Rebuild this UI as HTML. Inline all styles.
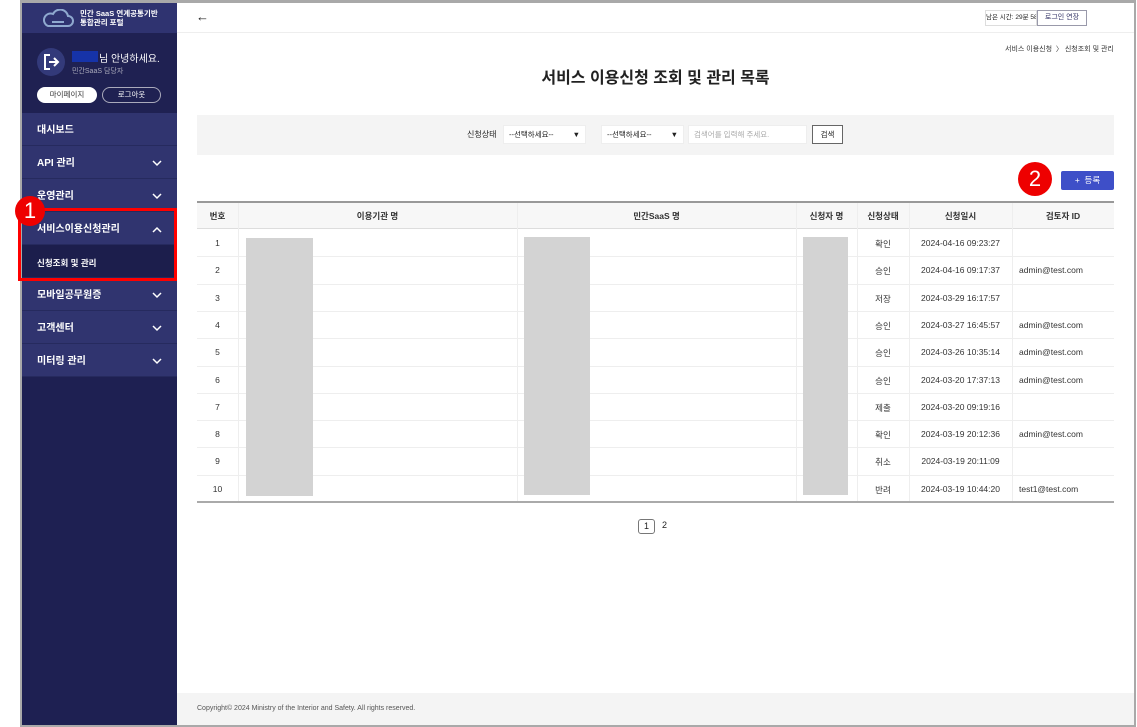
<!DOCTYPE html>
<html><head><meta charset="utf-8"><style>
*{margin:0;padding:0;box-sizing:border-box}
body{width:1137px;height:727px;position:relative;background:#fff;font-family:"Liberation Sans","Noto Sans CJK KR",sans-serif;overflow:hidden;color:#222}
.a{position:absolute;white-space:nowrap}
.frame{left:20px;top:0;width:1116px;height:727px;border:2px solid #a9a9a9;border-top-width:3px}
.sb{left:22px;top:3px;width:155px;height:722px;background:#1e2052}
.mi{position:absolute;left:0;width:155px;height:33px;background:#30346f;border-bottom:1px solid #262a5e;color:#fff;font-size:10px;font-weight:bold;padding-left:15px;line-height:36px}
.mi svg{position:absolute;right:15px;top:14px}
.td{position:absolute;font-size:8.5px;color:#333;text-align:center;white-space:nowrap}
.ph{position:absolute;background:#d3d3d3}
</style></head><body>
<div class="a sb">
  <div class="a" style="left:0;top:0;width:155px;height:30px;background:#2f3370"></div>
  <svg class="a" style="left:20px;top:6px" width="32" height="20" viewBox="0 0 32 20"><path d="M6 17 H26 A5 5 0 0 0 26 7 A8 8 0 0 0 11 5 A6 6 0 0 0 6 17 Z" fill="none" stroke="#8fa9cf" stroke-width="2"/><path d="M10 13 H22" stroke="#8fa9cf" stroke-width="2"/></svg>
  <div class="a" style="left:58px;top:6px;color:#fff;font-size:7.5px;font-weight:bold;line-height:9px">민간 SaaS 연계공통기반<br>통합관리 포털</div>
  <div class="a" style="left:0;top:30px;width:155px;height:80px;background:#1f2152"></div>
  <div class="a" style="left:15px;top:45px;width:28px;height:28px;border-radius:50%;background:#333a7a"></div>
  <svg class="a" style="left:19px;top:49px" width="20" height="20" viewBox="0 0 20 20"><path d="M9 3 H4 V17 H9 M8 10 H17 M13 6 L17 10 L13 14" fill="none" stroke="#fff" stroke-width="2"/></svg>
  <div class="a" style="left:50px;top:48px;width:26px;height:11px;background:#1633a8"></div>
  <div class="a" style="left:77px;top:47px;color:#fff;font-size:10px">님 안녕하세요.</div>
  <div class="a" style="left:50px;top:63px;color:#aab;font-size:7px">민간SaaS 담당자</div>
  <div class="a" style="left:15px;top:84px;width:60px;height:16px;border-radius:8px;background:#fff;color:#333;font-size:7.5px;text-align:center;line-height:16px">마이페이지</div>
  <div class="a" style="left:80px;top:84px;width:59px;height:16px;border-radius:8px;border:1px solid #aab;color:#fff;font-size:7.5px;text-align:center;line-height:14px">로그아웃</div>
  <div class="mi" style="top:110px">대시보드</div>
  <div class="mi" style="top:143px">API 관리<svg width="10" height="7"><path d="M1 1 L5 5 L9 1" fill="none" stroke="#fff" stroke-width="1.5"/></svg></div>
  <div class="mi" style="top:176px">운영관리<svg width="10" height="7"><path d="M1 1 L5 5 L9 1" fill="none" stroke="#fff" stroke-width="1.5"/></svg></div>
  <div class="mi" style="top:209px">서비스이용신청관리<svg width="10" height="7"><path d="M1 6 L5 2 L9 6" fill="none" stroke="#fff" stroke-width="1.5"/></svg></div>
  <div class="mi" style="top:242px;background:#1c1e4c;font-size:8.5px">신청조회 및 관리</div>
  <div class="mi" style="top:275px">모바일공무원증<svg width="10" height="7"><path d="M1 1 L5 5 L9 1" fill="none" stroke="#fff" stroke-width="1.5"/></svg></div>
  <div class="mi" style="top:308px">고객센터<svg width="10" height="7"><path d="M1 1 L5 5 L9 1" fill="none" stroke="#fff" stroke-width="1.5"/></svg></div>
  <div class="mi" style="top:341px">미터링 관리<svg width="10" height="7"><path d="M1 1 L5 5 L9 1" fill="none" stroke="#fff" stroke-width="1.5"/></svg></div>
</div>
<div class="a frame"></div>
<div class="a" style="left:18px;top:208px;width:159px;height:73px;border:3px solid #f00"></div>
<div class="a" style="left:15px;top:196px;width:30px;height:30px;border-radius:50%;background:#e00;color:#fff;font-size:22px;text-align:center;line-height:30px">1</div>

<div class="a" style="left:177px;top:3px;width:957px;height:30px;border-bottom:1px solid #eee"></div>
<div class="a" style="left:196px;top:9px;font-size:13px">←</div>
<div class="a" style="left:985px;top:10px;width:52px;height:16px;border:1px solid #ddd;font-size:6.5px;line-height:14px;text-align:center;overflow:hidden">남은 시간: 29분 58초</div>
<div class="a" style="left:1037px;top:10px;width:50px;height:16px;border:1px solid #99a;font-size:7px;line-height:14px;text-align:center;color:#336">로그인 연장</div>
<div class="a" style="left:1005px;top:44px;font-size:7px;color:#333">서비스 이용신청 &nbsp;〉 신청조회 및 관리</div>
<div class="a" style="left:177px;top:64px;width:957px;text-align:center;font-size:16px;font-weight:bold">서비스 이용신청 조회 및 관리 목록</div>
<div class="a" style="left:197px;top:115px;width:917px;height:40px;background:#f4f4f4"></div>
<div class="a" style="left:467px;top:129px;font-size:8px">신청상태</div>
<div class="a" style="left:503px;top:125px;width:83px;height:19px;background:#fff;border:1px solid #eee;font-size:7.5px;line-height:17px;padding-left:5px">--선택하세요-- <span style="position:absolute;right:5px">▼</span></div>
<div class="a" style="left:601px;top:125px;width:83px;height:19px;background:#fff;border:1px solid #eee;font-size:7.5px;line-height:17px;padding-left:5px">--선택하세요-- <span style="position:absolute;right:5px">▼</span></div>
<div class="a" style="left:688px;top:125px;width:119px;height:19px;background:#fff;border:1px solid #eee;font-size:7.5px;line-height:17px;padding-left:5px;color:#aaa">검색어를 입력해 주세요.</div>
<div class="a" style="left:812px;top:125px;width:31px;height:19px;background:#fff;border:1px solid #666;font-size:7.5px;line-height:17px;text-align:center">검색</div>
<div class="a" style="left:1061px;top:171px;width:53px;height:19px;background:#3e4fc8;border-radius:2px;color:#fff;font-size:8.5px;line-height:19px;text-align:center">+ &nbsp;등록</div>
<div class="a" style="left:1018px;top:162px;width:34px;height:34px;border-radius:50%;background:#e00;color:#fff;font-size:22px;text-align:center;line-height:34px">2</div>

<div class="a" style="left:197px;top:201px;width:917px;height:2px;background:#999"></div>
<div class="a" style="left:197px;top:203px;width:917px;height:26px;background:#f7f7f7;border-bottom:1px solid #ddd"></div>
<div class="a" style="left:197px;top:501px;width:917px;height:2px;background:#aaa"></div>
<div id="t"></div>
<div class="a" style="left:638px;top:519px;width:17px;height:15px;border:1px solid #777;border-radius:3px;font-size:9px;text-align:center;line-height:13px">1</div>
<div class="a" style="left:662px;top:520px;font-size:9px">2</div>
<div class="a" style="left:177px;top:693px;width:957px;height:32px;background:#f4f4f4"></div>
<div class="a" style="left:197px;top:705px;font-size:7px;color:#555">Copyright© 2024 Ministry of the Interior and Safety. All rights reserved.</div>
<script>
var cols=[197,238,517,796,857,909,1012,1114];
var hd=["번호","이용기관 명","민간SaaS 명","신청자 명","신청상태","신청일시","검토자 ID"];
var st=["확인","승인","저장","승인","승인","승인","제출","확인","취소","반려"];
var dt=["2024-04-16 09:23:27","2024-04-16 09:17:37","2024-03-29 16:17:57","2024-03-27 16:45:57","2024-03-26 10:35:14","2024-03-20 17:37:13","2024-03-20 09:19:16","2024-03-19 20:12:36","2024-03-19 20:11:09","2024-03-19 10:44:20"];
var id=["","admin@test.com","","admin@test.com","admin@test.com","admin@test.com","","admin@test.com","","test1@test.com"];
var h="";
for(var i=1;i<cols.length-1;i++)h+='<div class="a" style="left:'+cols[i]+'px;top:203px;width:1px;height:298px;background:#eee"></div>';
for(var i=0;i<7;i++)h+='<div class="td" style="left:'+cols[i]+'px;top:210px;width:'+(cols[i+1]-cols[i])+'px;font-weight:bold">'+hd[i]+'</div>';
for(var r=0;r<10;r++){var y=229+r*27.3;
 if(r>0)h+='<div class="a" style="left:197px;top:'+Math.round(y)+'px;width:917px;height:1px;background:#eee"></div>';
 var ty=Math.round(y+9);
 h+='<div class="td" style="left:197px;top:'+ty+'px;width:41px">'+(r+1)+'</div>';
 h+='<div class="td" style="left:857px;top:'+ty+'px;width:52px">'+st[r]+'</div>';
 h+='<div class="td" style="left:909px;top:'+ty+'px;width:103px">'+dt[r]+'</div>';
 h+='<div class="td" style="left:1019px;top:'+ty+'px;text-align:left">'+id[r]+'</div>';}
h+='<div class="ph" style="left:246px;top:238px;width:67px;height:258px"></div>';
h+='<div class="ph" style="left:524px;top:237px;width:66px;height:258px"></div>';
h+='<div class="ph" style="left:803px;top:237px;width:45px;height:258px"></div>';
document.getElementById("t").innerHTML=h;
</script>
</body></html>
